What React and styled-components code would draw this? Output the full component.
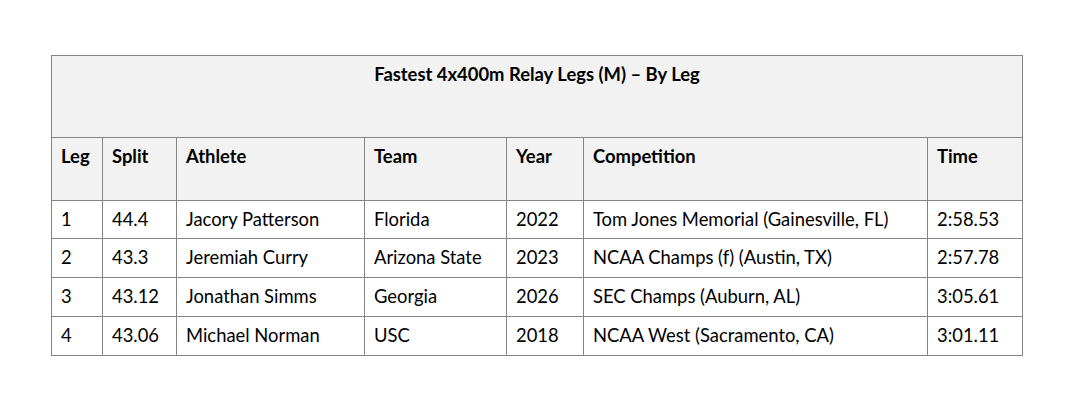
import React from "react";
import styled, { createGlobalStyle } from "styled-components";

const Global = createGlobalStyle`
  html, body { margin: 0; padding: 0; background: #ffffff; }
  body { font-family: "Lato", "Liberation Sans", sans-serif; color: #000; }
`;

const Page = styled.div`
  padding: 55px 0 0 51px;
`;

const Table = styled.table`
  border-collapse: collapse;
  table-layout: fixed;
  width: 971px;
  font-size: 18.4px;
  line-height: 1.2;
`;

const Cell = styled.td`
  border: 1px solid #858585;
  padding: 7px 9px 0 9px;
  vertical-align: top;
  text-align: left;
  white-space: nowrap;
  height: ${(p) => p.$h}px;
  box-sizing: border-box;
  background: ${(p) => (p.$shaded ? "#f2f2f2" : "#ffffff")};
  font-weight: ${(p) => (p.$bold ? 700 : 400)};
`;

const TitleCell = styled(Cell)`
  text-align: center;
`;

const cols = [51, 74, 188, 142, 77, 344, 95];
const headers = ["Leg", "Split", "Athlete", "Team", "Year", "Competition", "Time"];
const rows = [
  ["1", "44.4", "Jacory Patterson", "Florida", "2022", "Tom Jones Memorial (Gainesville, FL)", "2:58.53"],
  ["2", "43.3", "Jeremiah Curry", "Arizona State", "2023", "NCAA Champs (f) (Austin, TX)", "2:57.78"],
  ["3", "43.12", "Jonathan Simms", "Georgia", "2026", "SEC Champs (Auburn, AL)", "3:05.61"],
  ["4", "43.06", "Michael Norman", "USC", "2018", "NCAA West (Sacramento, CA)", "3:01.11"],
];

export default function App() {
  return (
    <>
      <Global />
      <Page>
        <Table>
          <colgroup>
            {cols.map((w, i) => (
              <col key={i} style={{ width: w }} />
            ))}
          </colgroup>
          <thead>
            <tr>
              <TitleCell as="th" colSpan={7} $h={82} $shaded $bold>
                Fastest 4x400m Relay Legs (M) – By Leg
              </TitleCell>
            </tr>
            <tr>
              {headers.map((h) => (
                <Cell as="th" key={h} $h={63} $shaded $bold>
                  {h}
                </Cell>
              ))}
            </tr>
          </thead>
          <tbody>
            {rows.map((r, ri) => (
              <tr key={r[0]}>
                {r.map((c, i) => (
                  <Cell key={i} $h={ri === 0 ? 38 : 39}>
                    {c}
                  </Cell>
                ))}
              </tr>
            ))}
          </tbody>
        </Table>
      </Page>
    </>
  );
}
